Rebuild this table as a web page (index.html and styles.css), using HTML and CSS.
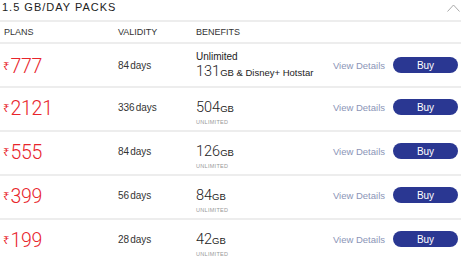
FILE: index.html
```html
<!DOCTYPE html>
<html lang="en">
<head>
<meta charset="utf-8">
<title>1.5 GB/Day Packs</title>
<link rel="stylesheet" href="styles.css">
</head>
<body>
<section class="pack">
  <div class="pack-head">
    <h2 class="pack-title">1.5 GB/DAY PACKS</h2>
    <svg class="chevron" width="13" height="8" viewBox="0 0 13 8"><polyline points="0.5,7.5 6.5,1 12.5,7.5" fill="none" stroke="#a0a0a0" stroke-width="0.9"/></svg>
  </div>
  <div class="cols">
    <span>Plans</span><span>Validity</span><span>Benefits</span>
  </div>

  <div class="plan plan-first">
    <div class="price"><span class="rupee">₹</span>777</div>
    <div class="validity">84<span class="unit">days</span></div>
    <div class="benefit benefit-multi">
      <span class="benefit-note">Unlimited</span>
      <span class="amount">131<small>GB &amp; Disney+ Hotstar</small></span>
    </div>
    <a class="details">View Details</a>
    <button class="buy">Buy</button>
  </div>

  <div class="plan">
    <div class="price"><span class="rupee">₹</span>2121</div>
    <div class="validity">336<span class="unit">days</span></div>
    <div class="benefit">
      <span class="amount">504<small>GB</small></span>
      <span class="tag">UNLIMITED</span>
    </div>
    <a class="details">View Details</a>
    <button class="buy">Buy</button>
  </div>

  <div class="plan">
    <div class="price"><span class="rupee">₹</span>555</div>
    <div class="validity">84<span class="unit">days</span></div>
    <div class="benefit">
      <span class="amount">126<small>GB</small></span>
      <span class="tag">UNLIMITED</span>
    </div>
    <a class="details">View Details</a>
    <button class="buy">Buy</button>
  </div>

  <div class="plan">
    <div class="price"><span class="rupee">₹</span>399</div>
    <div class="validity">56<span class="unit">days</span></div>
    <div class="benefit">
      <span class="amount">84<small>GB</small></span>
      <span class="tag">UNLIMITED</span>
    </div>
    <a class="details">View Details</a>
    <button class="buy">Buy</button>
  </div>

  <div class="plan">
    <div class="price"><span class="rupee">₹</span>199</div>
    <div class="validity">28<span class="unit">days</span></div>
    <div class="benefit">
      <span class="amount">42<small>GB</small></span>
      <span class="tag">UNLIMITED</span>
    </div>
    <a class="details">View Details</a>
    <button class="buy">Buy</button>
  </div>
</section>
</body>
</html>
```

FILE: styles.css
```css
* { box-sizing: border-box; margin: 0; padding: 0; }
body {
  margin: 0;
  background: #fff;
  font-family: "Liberation Sans", Arial, sans-serif;
  color: #333;
  width: 461px;
  overflow: hidden;
}
.pack-head {
  display: flex;
  justify-content: space-between;
  align-items: flex-start;
  height: 22px;
  border-bottom: 2px solid #ededed;
  padding: 0 1px 0 2px;
}
.pack-title {
  font-size: 11px;
  font-weight: normal;
  letter-spacing: 1px;
  line-height: 14px;
  color: #222;
}
.chevron { margin-top: 4px; }
.cols {
  display: grid;
  grid-template-columns: 114px 78px 1fr;
  height: 22px;
  border-bottom: 2px solid #ededed;
  padding: 1px 0 0 4px;
  font-size: 9px;
  line-height: 19px;
  text-transform: uppercase;
  color: #333;
}
.plan {
  display: grid;
  grid-template-columns: 114px 78px 1fr auto 65px;
  align-items: center;
  height: 44px;
  border-bottom: 2px solid #ededed;
  padding: 0 3px 5px 4px;
}
.plan-first { padding-bottom: 0; }
.price {
  color: #e8242b;
  font-family: Roboto, "Liberation Sans", sans-serif;
  font-weight: 300;
  font-size: 19.5px;
  line-height: 19px;
  letter-spacing: -0.3px;
  margin-left: -1px;
  margin-top: 2px;
}
.rupee {
  font-family: "Noto Sans", "DejaVu Sans", sans-serif;
  font-weight: 400;
  font-size: 11.5px;
  letter-spacing: 0;
  vertical-align: 3px;
  margin-right: 1px;
}
.validity {
  font-size: 10px;
  line-height: 12px;
  color: #333;
  margin-top: 2px;
}
.unit { margin-left: 1px; }
.benefit {
  align-self: start;
  padding-top: 12px;
  color: #222;
}
.benefit-multi { padding-top: 5px; }
.benefit-note {
  display: block;
  font-size: 10px;
  line-height: 15px;
}
.amount {
  display: block;
  font-family: Roboto, "Liberation Sans", sans-serif;
  font-weight: 300;
  font-size: 14.5px;
  line-height: 16px;
  white-space: nowrap;
}
.amount small {
  font-family: "Liberation Sans", Arial, sans-serif;
  font-weight: 400;
  font-size: 9.5px;
}
.tag {
  display: block;
  font-size: 5.5px;
  line-height: 8px;
  letter-spacing: 0.3px;
  color: #999;
  margin-top: 1px;
}
.details {
  font-size: 9.5px;
  color: #8b95b7;
  margin-right: 8px;
}
.buy {
  height: 16px;
  border: 0;
  border-radius: 8px;
  background: #2a3792;
  color: #fff;
  font-family: inherit;
  font-size: 10px;
}
```
